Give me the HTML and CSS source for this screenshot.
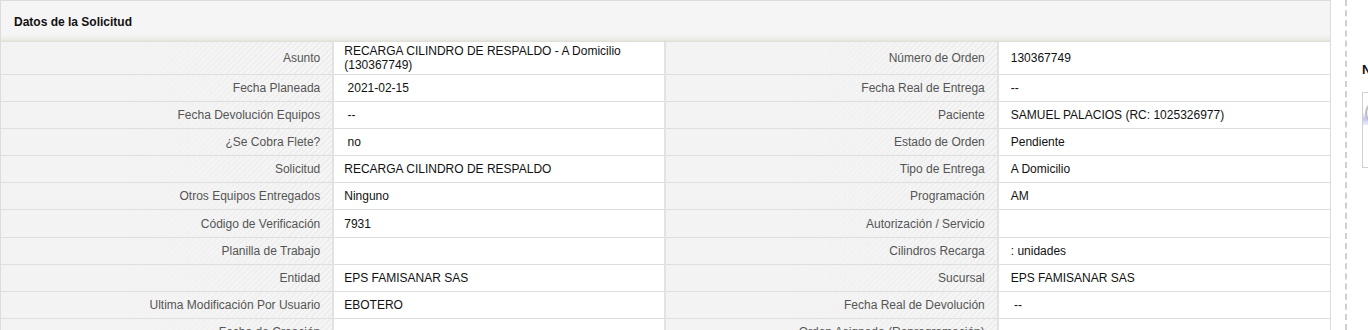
FILE: index.html
```
<!DOCTYPE html>
<html lang="es">
<head>
  <meta charset="UTF-8" />
  <meta name="viewport" content="width=device-width, initial-scale=1.0"/>
  <title>Datos de la Solicitud</title>
  <link rel="stylesheet" href="styles.css">
</head>
<body>
  <div class="page">
    <div class="panel">
      <div class="panel-head"><h2>Datos de la Solicitud</h2></div>
      <table class="detail">
        <tr class="tall">
          <th>Asunto</th>
          <td>RECARGA CILINDRO DE RESPALDO - A Domicilio (130367749)</td>
          <th>Número de Orden</th>
          <td>130367749</td>
        </tr>
        <tr>
          <th>Fecha Planeada</th>
          <td>&nbsp;2021-02-15</td>
          <th>Fecha Real de Entrega</th>
          <td>--</td>
        </tr>
        <tr>
          <th>Fecha Devolución Equipos</th>
          <td>&nbsp;--</td>
          <th>Paciente</th>
          <td>SAMUEL PALACIOS (RC: 1025326977)</td>
        </tr>
        <tr>
          <th>¿Se Cobra Flete?</th>
          <td>&nbsp;no</td>
          <th>Estado de Orden</th>
          <td>Pendiente</td>
        </tr>
        <tr>
          <th>Solicitud</th>
          <td>RECARGA CILINDRO DE RESPALDO</td>
          <th>Tipo de Entrega</th>
          <td>A Domicilio</td>
        </tr>
        <tr>
          <th>Otros Equipos Entregados</th>
          <td>Ninguno</td>
          <th>Programación</th>
          <td>AM</td>
        </tr>
        <tr>
          <th>Código de Verificación</th>
          <td>7931</td>
          <th>Autorización / Servicio</th>
          <td></td>
        </tr>
        <tr>
          <th>Planilla de Trabajo</th>
          <td></td>
          <th>Cilindros Recarga</th>
          <td>: unidades</td>
        </tr>
        <tr>
          <th>Entidad</th>
          <td>EPS FAMISANAR SAS</td>
          <th>Sucursal</th>
          <td>EPS FAMISANAR SAS</td>
        </tr>
        <tr>
          <th>Ultima Modificación Por Usuario</th>
          <td>EBOTERO</td>
          <th>Fecha Real de Devolución</th>
          <td>&nbsp;--</td>
        </tr>
        <tr>
          <th>Fecha de Creación</th>
          <td></td>
          <th>Orden Asignada (Reprogramación)</th>
          <td></td>
        </tr>
      </table>
    </div>

    <aside class="side">
      <h3>Novedades</h3>
      <div class="note">
        <div class="note-top">
          <span class="avatar"></span>
        </div>
      </div>
    </aside>
  </div>
</body>
</html>
```

FILE: styles.css
```
body {
  margin: 0;
  font-family: "Liberation Sans", Arial, sans-serif;
  font-size: 12px;
  background: #fff;
  overflow: hidden;
}
.page {
  display: flex;
  align-items: flex-start;
  width: 1700px;
}
.panel {
  flex: none;
  width: 1329px;
  border: 1px solid #dcdcdc;
  border-bottom: none;
  background: #fff;
}
.panel-head {
  height: 41px;
  padding-left: 13px;
  background: linear-gradient(to bottom, #f5f5f5 0, #f5f5f5 82%, #ebebe6 94%, #dddcd6 100%);
}
.panel-head h2 {
  margin: 0;
  padding-top: 1px;
  font-size: 12px;
  line-height: 41px;
  color: #111;
}
.detail {
  width: 100%;
  border-collapse: collapse;
  table-layout: fixed;
}
.detail tr {
  height: 27.1px;
}
.detail th,
.detail td {
  width: 25%;
  padding: 1px 10px;
  line-height: 14px;
  vertical-align: middle;
  border-top: 1px solid #dedede;
  font-size: 12px;
}
.detail tr.tall th,
.detail tr.tall td {
  padding-top: 2px;
  padding-bottom: 2px;
}
.detail tr:first-child th,
.detail tr:first-child td {
  border-top: none;
}
.detail th {
  padding-right: 12px;
  text-align: right;
  font-weight: normal;
  color: #555;
  border-left: 2px solid #e2e2e2;
  border-right: 2px solid #e2e2e2;
  background:
    linear-gradient(to right, #f3f3f3 40%, rgba(243, 243, 243, 0) 100%),
    repeating-linear-gradient(-45deg, #f6f6f6 0 2px, #ededed 2px 4px);
}
.detail th:first-child {
  border-left: none;
}
.detail td {
  color: #111;
  padding-left: 10px;
}
.detail td:last-child {
  padding-left: 12px;
}

.side {
  flex: none;
  width: 300px;
  height: 330px;
  margin-left: 14px;
  padding-left: 15px;
  border-left: 2px dashed #cfcfcf;
}
.side h3 {
  margin: 62px 0 14px;
  font-size: 13px;
  line-height: 16px;
  color: #111;
}
.note {
  height: 74px;
  border: 1px solid #d0d0d0;
}
.note-top {
  height: 32px;
  padding: 10px 0 0 2px;
  box-sizing: border-box;
  background: linear-gradient(to bottom, #fff 0, #fff 60%, #c8c8f2 80%, #ececfc 100%);
}
.avatar {
  display: block;
  width: 16px;
  height: 20px;
  border-radius: 50%;
  border: 2px solid #bdbdbd;
  box-sizing: border-box;
  background: #f2f2f2;
}
```
